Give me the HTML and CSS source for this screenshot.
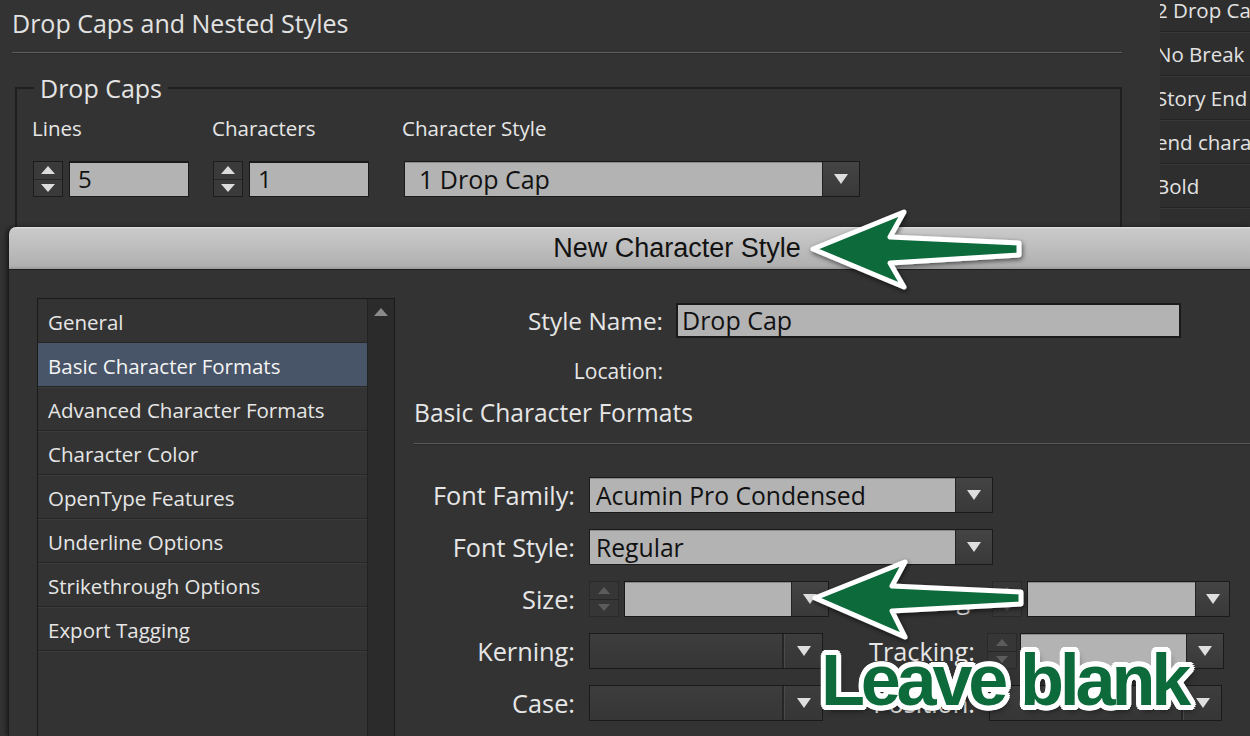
FILE: index.html
```html
<!DOCTYPE html>
<html>
<head>
<meta charset="utf-8">
<title>Drop Caps and Nested Styles</title>
<link rel="stylesheet" href="styles.css">
</head>
<body>
<div class="page">
  <div class="main">
    <h1 class="title">Drop Caps and Nested Styles</h1>
    <div class="rule"></div>
    <fieldset class="dropcaps">
      <legend>Drop Caps</legend>
      <div class="dc-row">
        <div class="dc-col dc-lines">
          <div class="dc-label">Lines</div>
          <div class="spin-field">
            <span class="spinner"><span class="sp-up"></span><span class="sp-down"></span></span>
            <span class="field">5</span>
          </div>
        </div>
        <div class="dc-col dc-chars">
          <div class="dc-label">Characters</div>
          <div class="spin-field">
            <span class="spinner"><span class="sp-up"></span><span class="sp-down"></span></span>
            <span class="field">1</span>
          </div>
        </div>
        <div class="dc-col dc-style">
          <div class="dc-label">Character Style</div>
          <div class="select dc-select">
            <span class="sel-value">1 Drop Cap</span>
            <span class="sel-btn"><span class="tri"></span></span>
          </div>
        </div>
      </div>
    </fieldset>
  </div>
  <div class="side">
    <div class="side-row">2 Drop Cap</div>
    <div class="side-row">No Break</div>
    <div class="side-row">Story End</div>
    <div class="side-row">end character</div>
    <div class="side-row">Bold</div>
    <div class="side-row"></div>
  </div>
</div>

<div class="dialog">
  <div class="dlg-title">New Character Style</div>
  <div class="dlg-body">
    <div class="list">
      <div class="list-items">
        <div class="item">General</div>
        <div class="item sel">Basic Character Formats</div>
        <div class="item">Advanced Character Formats</div>
        <div class="item">Character Color</div>
        <div class="item">OpenType Features</div>
        <div class="item">Underline Options</div>
        <div class="item">Strikethrough Options</div>
        <div class="item">Export Tagging</div>
      </div>
      <div class="scroll"><span class="scroll-up"></span></div>
    </div>
    <div class="form">
      <div class="f-name">
        <span class="f-name-label">Style Name:</span>
        <span class="name-input">Drop Cap</span>
      </div>
      <div class="f-loc">Location:</div>
      <div class="f-head">Basic Character Formats</div>
      <div class="f-sep"></div>
      <div class="f-row">
        <span class="lbl">Font Family:</span>
        <div class="select sel-family">
          <span class="sel-value">Acumin Pro Condensed</span>
          <span class="sel-btn"><span class="tri"></span></span>
        </div>
      </div>
      <div class="f-row">
        <span class="lbl">Font Style:</span>
        <div class="select sel-family">
          <span class="sel-value">Regular</span>
          <span class="sel-btn"><span class="tri"></span></span>
        </div>
      </div>
      <div class="f-row">
        <span class="lbl">Size:</span>
        <span class="spinner dim"><span class="sp-up"></span><span class="sp-down"></span></span>
        <div class="select combo c-size">
          <span class="sel-value"></span>
          <span class="sel-btn"><span class="tri"></span></span>
        </div>
        <span class="lbl2 lbl-lead">Leading:</span>
        <span class="spinner dim"><span class="sp-up"></span><span class="sp-down"></span></span>
        <div class="select combo c-lead">
          <span class="sel-value"></span>
          <span class="sel-btn"><span class="tri"></span></span>
        </div>
      </div>
      <div class="f-row">
        <span class="lbl">Kerning:</span>
        <div class="select dark">
          <span class="sel-value"></span>
          <span class="sel-btn"><span class="tri"></span></span>
        </div>
        <span class="lbl2 lbl-track">Tracking:</span>
        <span class="spinner dim"><span class="sp-up"></span><span class="sp-down"></span></span>
        <div class="select combo c-track">
          <span class="sel-value"></span>
          <span class="sel-btn"><span class="tri"></span></span>
        </div>
      </div>
      <div class="f-row">
        <span class="lbl">Case:</span>
        <div class="select dark">
          <span class="sel-value"></span>
          <span class="sel-btn"><span class="tri"></span></span>
        </div>
        <span class="lbl2 lbl-pos">Position:</span>
        <div class="select dark pos">
          <span class="sel-value"></span>
          <span class="sel-btn"><span class="tri"></span></span>
        </div>
      </div>
    </div>
  </div>
</div>

<svg class="arrows" width="1250" height="736" viewBox="0 0 1250 736" aria-hidden="true">
  <defs>
    <filter id="sh" x="-20%" y="-40%" width="140%" height="180%">
      <feDropShadow dx="1" dy="2" stdDeviation="2.5" flood-color="#000" flood-opacity="0.6"/>
    </filter>
  </defs>
  <polygon class="arrow" filter="url(#sh)" points="813,249 904,212 890,237 1019,243 1019,255 890,263 904,287"/>
  <polygon class="arrow" filter="url(#sh)" points="815,598 905,562 892,586 1021,592 1021,604 892,611 905,637"/>
</svg>
<div class="callout">Leave blank</div>
</body>
</html>
```

FILE: styles.css
```css
* { box-sizing: border-box; }
html, body { margin: 0; padding: 0; }
body {
  width: 1250px;
  height: 736px;
  overflow: hidden;
  position: relative;
  background: #333333;
  font-family: "Open Sans", "DejaVu Sans", sans-serif;
  color: #e4e4e4;
}

.page { display: flex; height: 736px; }
.main { width: 1160px; padding: 8px 0 0 12px; }
.title {
  margin: 0;
  font-size: 25px;
  font-weight: 400;
  line-height: 30px;
  color: #e2e2e2;
}
.rule {
  margin-top: 14px;
  width: 1110px;
  height: 2px;
  border-top: 1px solid #5e5e5e;
  border-bottom: 1px solid #2a2a2a;
}

.dropcaps {
  margin: 19px 0 0 3px;
  width: 1107px;
  height: 220px;
  min-width: 0;
  padding: 0 0 0 15px;
  border: 2px solid #1f1f1f;
}
.dropcaps legend {
  margin-left: 2px;
  padding: 0 6px;
  font-size: 25px;
  line-height: 30px;
  color: #e4e4e4;
}
.dc-row { display: flex; margin-top: 12px; }
.dc-col { display: flex; flex-direction: column; }
.dc-lines { width: 180px; }
.dc-chars { width: 190px; }
.dc-label { font-size: 20.5px; line-height: 26px; height: 26px; margin-bottom: 20px; color: #e6e6e6; }
.spin-field { display: flex; gap: 6px; margin-left: 1px; }

.spinner {
  width: 30px;
  height: 36px;
  display: flex;
  flex-direction: column;
  background: #3a3a3a;
  border: 1px solid #1c1c1c;
  flex: none;
}
.sp-up, .sp-down {
  flex: 1;
  display: flex;
  align-items: center;
  justify-content: center;
}
.sp-up { border-bottom: 1px solid #262626; }
.sp-up::before {
  content: "";
  border-left: 7px solid transparent;
  border-right: 7px solid transparent;
  border-bottom: 8px solid #dcdcdc;
}
.sp-down::before {
  content: "";
  border-left: 7px solid transparent;
  border-right: 7px solid transparent;
  border-top: 8px solid #dcdcdc;
}
.spinner.dim { background: #363636; border-color: #2a2a2a; }
.spinner.dim .sp-up::before { border-bottom-color: #5c5c5c; border-left-width: 6px; border-right-width: 6px; border-bottom-width: 7px; }
.spinner.dim .sp-down::before { border-top-color: #5c5c5c; border-left-width: 6px; border-right-width: 6px; border-top-width: 7px; }

.field {
  width: 120px;
  height: 36px;
  background: #b3b3b3;
  border: 1px solid #1a1a1a;
  border-top-width: 2px;
  color: #111;
  font-size: 24px;
  line-height: 32px;
  padding-left: 8px;
}

.select {
  display: flex;
  height: 36px;
  border: 1px solid #1a1a1a;
  flex: none;
}
.sel-value {
  flex: 1;
  background: #b3b3b3;
  color: #111;
  padding-left: 8px;
  line-height: 33px;
  border-top: 1px solid #8a8a8a;
  white-space: nowrap;
  overflow: hidden;
}
.sel-btn {
  width: 37px;
  background: linear-gradient(#444, #393939);
  border-left: 1px solid #222;
  display: flex;
  align-items: center;
  justify-content: center;
}
.tri {
  border-left: 7px solid transparent;
  border-right: 7px solid transparent;
  border-top: 10px solid #dedede;
}
.dc-select { width: 456px; margin-left: 2px; font-size: 25px; }
.dc-select .sel-value { padding-left: 14px; }

.side {
  flex: 1;
  background: #2e2e2e;
  overflow: hidden;
  margin-top: -12px;
}
.side-row {
  height: 44px;
  line-height: 44px;
  margin-left: -4px;
  font-size: 20.5px;
  white-space: nowrap;
  color: #e2e2e2;
  border-bottom: 1px solid #242424;
  box-shadow: 0 1px 0 #383838;
}

/* dialog overlays the page */
.dialog {
  position: absolute;
  left: 8px;
  top: 227px;
  width: 1242px;
  height: 509px;
  background: #333333;
  border-left: 1px solid #1b1b1b;
  border-top-left-radius: 7px;
  box-shadow: -2px 0 4px rgba(0, 0, 0, 0.45);
}
.dlg-title {
  height: 43px;
  padding-left: 95px;
  border-top-left-radius: 7px;
  background: linear-gradient(#e0e0e0 0, #c9c9c9 6%, #bdbdbd 50%, #b0b0b0 92%, #9a9a9a 100%);
  border-bottom: 1px solid #1d1d1d;
  text-align: center;
  font-family: "Liberation Sans", Arial, sans-serif;
  font-size: 27px;
  line-height: 43px;
  color: #121212;
}
.dlg-body { display: flex; padding: 28px 0 0 28px; }

.list {
  width: 358px;
  height: 460px;
  display: flex;
  border: 1px solid #1a1a1a;
  background: #333;
  flex: none;
}
.list-items { width: 330px; }
.item {
  height: 44px;
  line-height: 46px;
  padding-left: 10px;
  font-size: 20.5px;
  color: #e6e6e6;
  border-bottom: 1px solid #262626;
  box-shadow: 0 1px 0 #3b3b3b;
  white-space: nowrap;
}
.item.sel { background: #485467; color: #f4f4f4; }
.scroll {
  width: 27px;
  background: #2b2b2b;
  border-left: 1px solid #222;
  display: flex;
  justify-content: center;
  padding-top: 9px;
}
.scroll-up {
  width: 0;
  height: 0;
  border-left: 7px solid transparent;
  border-right: 7px solid transparent;
  border-bottom: 8px solid #8a8a8a;
}

.form {
  margin-left: 19px;
  flex: 1;
  display: flex;
  flex-direction: column;
  font-size: 25.3px;
  color: #e6e6e6;
}
.f-name { display: flex; align-items: center; margin-top: 5px; }
.f-name-label { width: 249px; text-align: right; margin-right: 13px; font-size: 24.4px; }
.name-input {
  width: 505px;
  height: 35px;
  background: #b3b3b3;
  border: 2px solid #1a1a1a;
  color: #111;
  padding-left: 4px;
  line-height: 30px;
  font-size: 25px;
}
.f-loc {
  width: 249px;
  text-align: right;
  font-size: 21px;
  line-height: 26px;
  margin-top: 20px;
}
.f-head { font-size: 24.6px; line-height: 30px; margin-top: 14px; }
.f-sep {
  margin-top: 15px;
  height: 2px;
  border-top: 1px solid #595959;
  border-bottom: 1px solid #2a2a2a;
}
.f-row { display: flex; align-items: center; height: 36px; margin-top: 16px; }
.f-sep + .f-row { margin-top: 32px; }
.lbl { width: 161px; text-align: right; margin-right: 14px; flex: none; white-space: nowrap; }
.lbl2 { text-align: right; flex: none; white-space: nowrap; }
.sel-family { width: 404px; font-size: 24.7px; }
.sel-family .sel-value { padding-left: 6px; }

.combo { margin-left: 5px; }
.c-size { width: 205px; }
.lbl-lead { width: 148px; margin-right: 15px; }
.c-lead { width: 203px; }
.c-lead .sel-btn { width: 34px; }
.lbl-track { width: 152px; margin-right: 12px; }
.c-track { width: 204px; margin-left: 3px; }

.select.dark { width: 234px; }
.select.dark .sel-value {
  background: linear-gradient(#3d3d3d, #363636);
  border-top: none;
  border-right: 1px solid #4a4a4a;
  box-shadow: inset -2px 0 0 #262626;
}
.select.dark .sel-btn { background: linear-gradient(#3d3d3d, #363636); border-left: none; }
.lbl-pos { width: 152px; margin-right: 14px; }
.select.dark.pos { width: 233px; }

/* annotations drawn over the screenshot */
.arrows {
  position: absolute;
  left: 0;
  top: 0;
  pointer-events: none;
}
.arrow {
  fill: #0c6a3b;
  stroke: #ffffff;
  stroke-width: 5;
  stroke-linejoin: round;
}
.callout {
  position: absolute;
  left: 821px;
  top: 635px;
  font-family: "Liberation Sans", Arial, sans-serif;
  font-weight: 700;
  font-size: 72px;
  line-height: 90px;
  letter-spacing: -4.2px;
  color: #0c6a3b;
  white-space: nowrap;
  text-shadow:
    5px 0 0 #fff, -5px 0 0 #fff, 0 5px 0 #fff, 0 -5px 0 #fff,
    3.6px 3.6px 0 #fff, -3.6px 3.6px 0 #fff, 3.6px -3.6px 0 #fff, -3.6px -3.6px 0 #fff,
    4.6px 1.9px 0 #fff, -4.6px 1.9px 0 #fff, 4.6px -1.9px 0 #fff, -4.6px -1.9px 0 #fff,
    1.9px 4.6px 0 #fff, -1.9px 4.6px 0 #fff, 1.9px -4.6px 0 #fff, -1.9px -4.6px 0 #fff,
    3px 5px 7px rgba(0, 0, 0, 0.7);
}
```
